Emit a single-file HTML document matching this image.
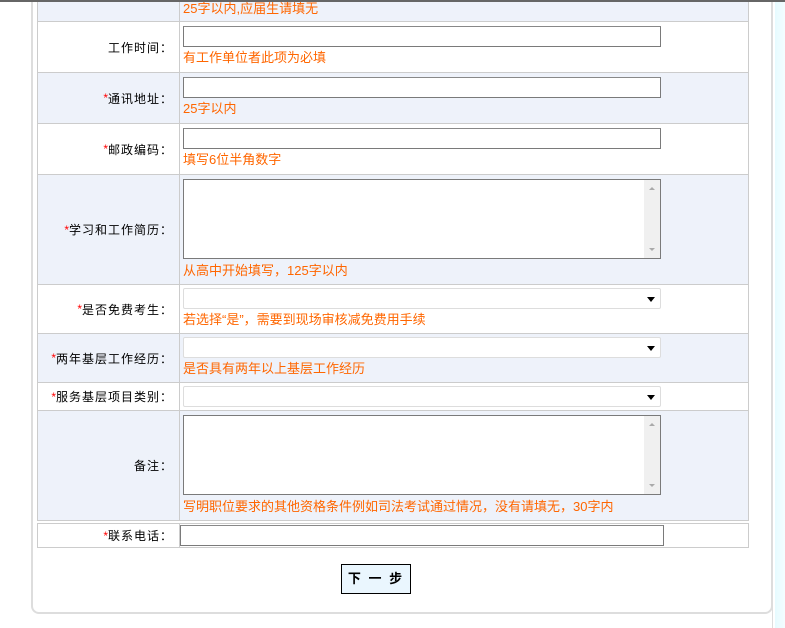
<!DOCTYPE html>
<html><head><meta charset="utf-8"><style>
*{margin:0;padding:0;box-sizing:border-box}
body{width:785px;height:628px;background:#fff;position:relative;overflow:hidden;font-family:"Liberation Sans","WenQuanYi Zen Hei","Noto Sans CJK SC",sans-serif;font-size:12px;color:#000}
.topline{position:absolute;left:0;top:0;width:785px;height:2px;background:#666}
.panel{position:absolute;left:31px;top:-10px;width:742px;height:624px;border:2px solid #ddd;border-top:none;border-radius:0 0 8px 8px}
.rstripe{position:absolute;left:772px;top:0;width:13px;height:628px;background:linear-gradient(90deg,#ddd 0,#ddd 1px,#fff 1px,#fff 3px,#e6fbff 3px,#f4fdff 100%)}
.row{position:absolute;left:37px;width:712px;border:1px solid #ccc}
.row.b{background:#eef2fa}
.lab{position:absolute;left:0;top:0;bottom:0;width:142px;border-right:1px solid #ccc;text-align:right;padding-right:6px;display:flex;align-items:center;justify-content:flex-end;letter-spacing:1px}
.lab i{color:#f00;font-style:normal;letter-spacing:0}
.inp{position:absolute;left:145px;width:478px;height:21px;background:#fff;border:1px solid #7a7a7a;border-top-color:#888}
.sel{position:absolute;left:145px;width:478px;height:21px;background:#fff;border:1px solid #ddd;border-radius:2px}
.sel:after{content:"";position:absolute;right:5px;top:8px;border-left:4px solid transparent;border-right:4px solid transparent;border-top:5px solid #000}
.ta{position:absolute;left:145px;width:478px;height:80px;background:#fff;border:1px solid #7a7a7a}
.ta .sb{position:absolute;right:0;top:0;width:16px;height:78px;background:#f0f0f0}
.ta .sb:before{content:"";position:absolute;left:5px;top:7px;border-left:3px solid transparent;border-right:3px solid transparent;border-bottom:3px solid #aaa}
.ta .sb:after{content:"";position:absolute;left:5px;bottom:7px;border-left:3px solid transparent;border-right:3px solid transparent;border-top:3px solid #aaa}
.tip{position:absolute;left:145px;color:#ff6600;white-space:nowrap;font-size:13px}
.btn{position:absolute;left:341px;top:564px;width:70px;height:30px;border:1px solid #000;background:#eaf6fe;font-weight:bold;font-size:13px;text-align:center;line-height:28px;letter-spacing:2px}
</style></head><body>
<div class="panel"></div>
<div class="rstripe"></div>
<div class="row b" style="top:-10px;height:32px"><div class="lab"></div><div class="tip" style="top:7px">25字以内,应届生请填无</div></div>
<div class="row" style="top:21px;height:52px"><div class="lab">工作时间：</div><div class="inp" style="top:4px"></div><div class="tip" style="top:25px">有工作单位者此项为必填</div></div>
<div class="row b" style="top:72px;height:52px"><div class="lab"><i>*</i>通讯地址：</div><div class="inp" style="top:4px"></div><div class="tip" style="top:25px">25字以内</div></div>
<div class="row" style="top:123px;height:52px"><div class="lab"><i>*</i>邮政编码：</div><div class="inp" style="top:4px"></div><div class="tip" style="top:25px">填写6位半角数字</div></div>
<div class="row b" style="top:174px;height:111px"><div class="lab"><i>*</i>学习和工作简历：</div><div class="ta" style="top:4px"><div class="sb"></div></div><div class="tip" style="top:85px">从高中开始填写，125字以内</div></div>
<div class="row" style="top:284px;height:50px"><div class="lab"><i>*</i>是否免费考生：</div><div class="sel" style="top:3px"></div><div class="tip" style="top:24px">若选择“是”，需要到现场审核减免费用手续</div></div>
<div class="row b" style="top:333px;height:50px"><div class="lab"><i>*</i>两年基层工作经历：</div><div class="sel" style="top:3px"></div><div class="tip" style="top:24px">是否具有两年以上基层工作经历</div></div>
<div class="row" style="top:382px;height:29px"><div class="lab"><i>*</i>服务基层项目类别：</div><div class="sel" style="top:3px"></div></div>
<div class="row b" style="top:410px;height:111px"><div class="lab">备注：</div><div class="ta" style="top:4px"><div class="sb"></div></div><div class="tip" style="top:85px">写明职位要求的其他资格条件例如司法考试通过情况，没有请填无，30字内</div></div>
<div class="row" style="top:523px;height:25px"><div class="lab"><i>*</i>联系电话：</div><div class="inp" style="top:1px;left:142px;width:484px"></div></div>
<div class="btn">下 一 步</div>
<div class="topline"></div>
</body></html>
